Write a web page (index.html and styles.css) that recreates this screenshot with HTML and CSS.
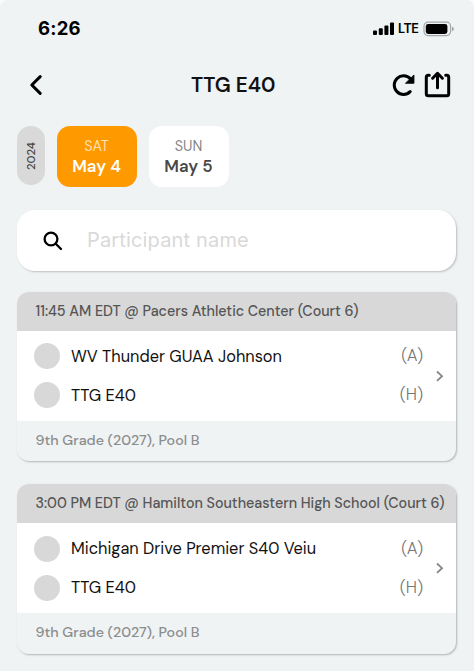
FILE: index.html
```html
<!DOCTYPE html>
<html lang="en">
<head>
<meta charset="utf-8">
<title>TTG E40</title>
<link rel="stylesheet" href="styles.css">
</head>
<body>
<div class="screen">
<header class="status">
  <span class="clock">6:26</span>
  <svg class="signal" width="22" height="14" viewBox="0 0 22 14"><rect x="0" y="8.5" width="4" height="4.5" rx="1"/><rect x="5.8" y="6.2" width="4" height="6.8" rx="1"/><rect x="11.4" y="3.4" width="4" height="9.6" rx="1"/><rect x="17" y="0.4" width="4" height="12.6" rx="1"/></svg>
  <span class="lte">LTE</span>
  <svg class="battery" width="32" height="16" viewBox="0 0 32 16"><rect x="1" y="1.2" width="26.6" height="13.4" rx="4" fill="none" stroke="#a4a7a8" stroke-width="1.2"/><rect x="2.8" y="3" width="21.6" height="10" rx="2.4"/><path d="M29.2 5.8q1.5.6 1.5 2.2t-1.5 2.2z" fill="#8d9091"/></svg>
</header>
<nav class="bar">
  <svg class="back" width="16" height="24" viewBox="0 0 16 24"><path d="M12.2 3.6 3.8 12l8.4 8.4"/></svg>
  <h1 class="title">TTG E40</h1>
  <svg class="reload" width="26" height="28" viewBox="0 0 26 28"><path d="M19.2 20.6A9.3 9.3 0 1 1 19.4 7.8" /><path class="solid" d="M22.9 4.4v7.8h-8z"/></svg>
  <svg class="share" width="28" height="28" viewBox="0 0 28 28"><path d="M5.3 4.3H4.3Q2.3 4.3 2.3 6.3v16.4q0 2 2 2h18.4q2 0 2-2V6.3q0-2-2-2h-1M13.5 16.8V2.7M8.6 7.2 13.5 2.3l4.9 4.9"/></svg>
</nav>
<section class="dates">
  <div class="year"><span>2024</span></div>
  <div class="day active"><span class="dow">SAT</span><b>May 4</b></div>
  <div class="day"><span class="dow">SUN</span><b>May 5</b></div>
</section>
<div class="search">
  <svg width="20" height="20" viewBox="0 0 20 20"><circle cx="8" cy="8" r="6.4"/><path d="m12.7 12.7 5.3 5.3"/></svg>
  <span>Participant name</span>
</div>
<main class="games">
  <article class="card">
    <div class="when">11:45 AM EDT @ Pacers Athletic Center (Court 6)</div>
    <div class="match">
      <div class="teams">
        <div class="team"><i></i><span class="name">WV Thunder GUAA Johnson</span><span class="side">(A)</span></div>
        <div class="team"><i></i><span class="name">TTG E40</span><span class="side">(H)</span></div>
      </div>
      <svg class="go" width="10" height="14" viewBox="0 0 10 14"><path d="m2 2.5 5 4.7-5 4.7"/></svg>
    </div>
    <div class="pool">9th Grade (2027), Pool B</div>
  </article>
  <article class="card">
    <div class="when">3:00 PM EDT @ Hamilton Southeastern High School (Court 6)</div>
    <div class="match">
      <div class="teams">
        <div class="team"><i></i><span class="name">Michigan Drive Premier S40 Veiu</span><span class="side">(A)</span></div>
        <div class="team"><i></i><span class="name">TTG E40</span><span class="side">(H)</span></div>
      </div>
      <svg class="go" width="10" height="14" viewBox="0 0 10 14"><path d="m2 2.5 5 4.7-5 4.7"/></svg>
    </div>
    <div class="pool">9th Grade (2027), Pool B</div>
  </article>
</main>
</div>
</body>
</html>
```
FILE: styles.css
```css
* { box-sizing: border-box; }
body {
  margin: 0;
  background: #fafbfc;
  font-family: "DM Sans", Inter, "Liberation Sans", sans-serif;
  color: #111;
  white-space: nowrap;
}
.screen { height: 671px; overflow: hidden; border-radius: 7px 7px 0 0; background: #eff3f4; }
svg { display: block; flex: none; }
.status { display: flex; align-items: center; height: 57px; padding: 0 19px 0 38px; }
.clock { margin: -1px auto 0 0; font-family: Inter, sans-serif; font-size: 18.5px; font-weight: 700; letter-spacing: .25px; color: #000; }
.lte { margin: 0 4px 0 3px; width: 21px; font-family: Inter, sans-serif; font-size: 12.5px; font-weight: 600; letter-spacing: -.5px; color: #000; }
.bar { display: flex; align-items: center; height: 56px; padding: 0 22px 0 28px; }
.bar svg { fill: none; stroke: #000; stroke-width: 3; stroke-linecap: round; stroke-linejoin: round; }
.bar .solid { fill: #000; stroke-width: 1; }
.title { flex: 1; margin: -1px 0 0 18px; padding-left: 129px; font-size: 20.7px; font-weight: 600; }
.reload { margin-right: 7px; }
.dates { display: flex; gap: 12px; height: 61px; margin: 13px 17px 0; }
.year { display: flex; align-items: center; justify-content: center; width: 28px; height: 59px; border-radius: 14px; background: #d9d9d9; color: #444; font-size: 11.5px; font-weight: 500; }
.year span { writing-mode: vertical-rl; transform: rotate(180deg); }
.day { display: flex; flex-direction: column; align-items: center; width: 80px; padding-top: 11px; border-radius: 13px; background: #fff; color: #484848; line-height: 18px; }
.dow { padding-right: 1px; font-size: 14.3px; color: #868686; }
.day b { margin-top: 2px; padding-right: 1px; font-size: 16.8px; font-weight: 600; }
.day.active { background: #ff9900; color: #fff; }
.active .dow { color: #ffe1b0; }
.search { display: flex; align-items: center; height: 61px; margin: 23px 18px 0 17px; padding-left: 26px; border-radius: 18px; background: #fff; box-shadow: 1px 1px 2px rgba(0,0,0,.22); }
.search svg { fill: none; stroke: #000; stroke-width: 2.3; stroke-linecap: round; }
.search span { margin: -1px 0 0 24px; font-family: Inter, sans-serif; font-size: 20px; letter-spacing: .16px; color: #d9d9d9; }
.games { display: flex; flex-direction: column; gap: 23px; margin: 21px 18px 0 17px; }
.card { overflow: hidden; height: 169.4px; border-radius: 12px; background: #eff3f4; box-shadow: 1px 1px 2px rgba(0,0,0,.25); }
.when { height: 39px; padding-left: 18.5px; background: #d8d8d8; color: #555; font-size: 14.3px; font-weight: 500; line-height: 39px; }
.match { display: flex; align-items: center; height: 89.5px; padding: 0 11px 0 17px; background: #fff; }
.teams { flex: 1; }
.team { display: flex; align-items: center; height: 39px; }
.team i { width: 26px; height: 26px; border-radius: 50%; background: #d8d8d8; }
.name { margin-left: 11px; font-size: 16.35px; }
.side { margin: -1px 12px 0 auto; font-size: 16.6px; font-weight: 300; color: #777; }
.go { fill: none; stroke: #858585; stroke-width: 1.8; }
.pool { padding-left: 18.5px; color: #8b8d8e; font-size: 14.27px; font-weight: 500; line-height: 39px; }
```
